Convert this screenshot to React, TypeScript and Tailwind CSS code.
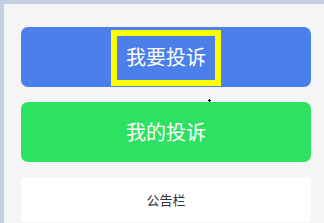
export default function App() {
  return (
    <div className="h-[223px] w-[324px] overflow-hidden bg-[#c6d0e3] pl-1 pt-1 font-['Noto_Sans_CJK_SC','Noto_Sans',sans-serif]">
      <div className="relative h-[260px] w-[324px] bg-[#f5f5f5] px-[17px] pt-[23px]">
        <div className="flex h-[60px] items-center justify-center rounded-[7px] bg-[#4b7fe9]">
          <div className="mb-[1px] flex h-[56px] w-[110px] items-center justify-center self-end border-[6px] border-[#ffff00] pb-[2px] text-[20px] text-white">
            我要投诉
          </div>
        </div>
        <div className="mt-[15px] flex h-[60px] items-center justify-center rounded-[7px] bg-[#2de162] text-[20px] text-white">
          我的投诉
        </div>
        <div className="mt-[15px] flex h-[45px] items-center justify-center rounded-t-[4px] bg-white pt-[1px] text-[13px] text-[#333]">
          公告栏
        </div>
        {/* tiny cursor cross */}
        <div className="absolute left-[205px] top-[95px] h-[3px] w-[1px] bg-black" />
        <div className="absolute left-[204px] top-[96px] h-[1px] w-[3px] bg-black" />
      </div>
    </div>
  );
}
